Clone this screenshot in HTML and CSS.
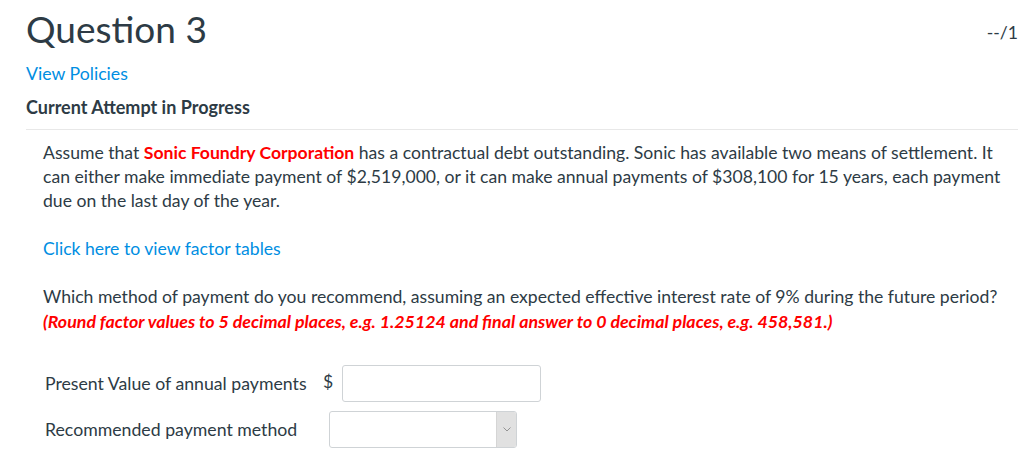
FILE: index.html
```html
<!DOCTYPE html>
<html>
<head>
<meta charset="utf-8">
<link rel="stylesheet" href="styles.css">
</head>
<body>
<div class="page">
  <div class="header">
    <h1 class="title">Question 3</h1>
    <span class="score">--/1</span>
  </div>
  <a class="policies" href="#">View Policies</a>
  <div class="attempt">Current Attempt in Progress</div>
  <div class="rule"></div>
  <div class="question">
    <p class="text">Assume that <span class="red-bold">Sonic Foundry Corporation</span> has a contractual debt outstanding. Sonic has available two means of settlement. It can either make immediate payment of $2,519,000, or it can make annual payments of $308,100 for 15 years, each payment due on the last day of the year.</p>
    <p class="text"><a class="link" href="#">Click here to view factor tables</a></p>
    <p class="text">Which method of payment do you recommend, assuming an expected effective interest rate of 9% during the future period?<br><span class="red-italic">(Round factor values to 5 decimal places, e.g. 1.25124 and final answer to 0 decimal places, e.g. 458,581.)</span></p>
    <div class="form">
      <div class="label">Present Value of annual payments</div>
      <div class="control"><span class="dollar">$</span><span class="input"></span></div>
      <div class="label">Recommended payment method</div>
      <div class="control"><span class="select"><span class="arrow"><svg width="8" height="5" viewBox="0 0 8 5"><path d="M0.5 0.5 L4 4 L7.5 0.5" fill="none" stroke="#8a8a8a" stroke-width="0.9"/></svg></span></span></div>
    </div>
  </div>
</div>
</body>
</html>
```

FILE: styles.css
```css
html, body {
  margin: 0;
  padding: 0;
  background: #ffffff;
}
body {
  font-family: Lato, "Open Sans", Arial, sans-serif;
  color: #2d3b45;
  font-size: 17.6px;
}
.page {
  padding: 6px 6px 0 26px;
}
.header {
  display: flex;
  justify-content: space-between;
  align-items: flex-start;
}
.title {
  margin: 0;
  font-size: 37px;
  font-weight: 400;
  line-height: 46px;
}
.score {
  font-size: 17.6px;
  margin-top: 16px;
  color: #2d3b45;
}
.policies {
  display: block;
  margin-top: 10px;
  color: #008ee2;
  text-decoration: none;
  line-height: 24px;
  font-size: 17.7px;
}
.attempt {
  font-weight: 700;
  font-size: 18px;
  line-height: 24px;
  margin-top: 9px;
}
.rule {
  height: 1px;
  background: #e8e8e8;
  margin-top: 10px;
}
.question {
  padding: 11px 14px 0 17px;
}
.text {
  margin: 0 0 24px 0;
  line-height: 24px;
}
.red-bold {
  color: #ff0000;
  font-weight: 700;
}
.red-italic {
  color: #ff0000;
  font-weight: 700;
  font-style: italic;
  font-size: 17.8px;
}
.link {
  color: #008ee2;
  text-decoration: none;
}
.form {
  display: grid;
  grid-template-columns: 278px auto;
  row-gap: 9px;
  align-items: center;
  padding-left: 2px;
  margin-top: 31px;
}
.label {
  font-size: 17.7px;
}
.control {
  display: flex;
  align-items: center;
}
.dollar {
  width: 19px;
  margin-top: -4px;
}
.input {
  display: block;
  width: 197px;
  height: 35px;
  border: 1px solid #cfd3d6;
  border-radius: 3px;
  background: #fff;
}
.select {
  display: flex;
  justify-content: flex-end;
  width: 186px;
  height: 35px;
  margin-left: 6px;
  border: 1px solid #cfd3d6;
  border-radius: 3px;
  background: #fff;
  overflow: hidden;
}
.arrow {
  width: 19px;
  background: #e1e1e1;
  border-left: 1px solid #d5d5d5;
  display: flex;
  align-items: center;
  justify-content: center;
}
```
